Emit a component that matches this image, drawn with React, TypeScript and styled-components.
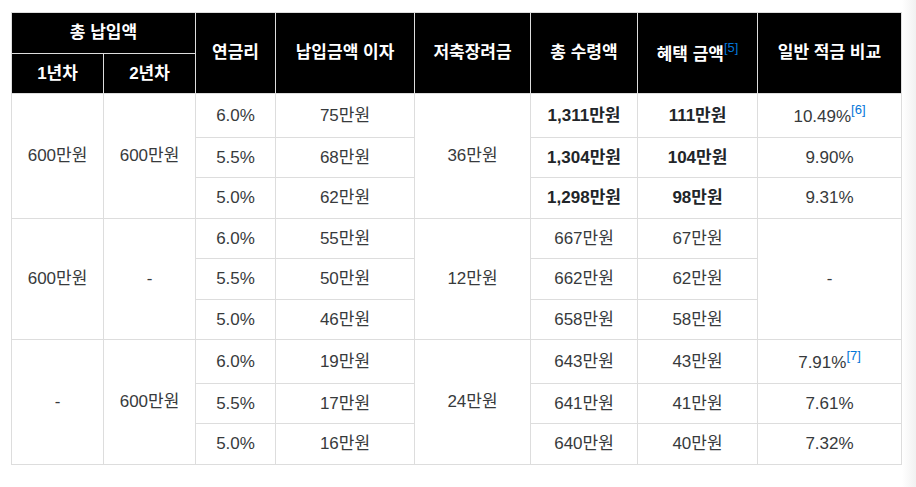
import React from 'react';
import styled, { createGlobalStyle } from 'styled-components';

const GlobalStyle = createGlobalStyle`
  html, body {
    margin: 0;
    padding: 0;
  }
  body {
    background: linear-gradient(to right, #fff 902px, #f1f1f1 916px);
    font-family: "Liberation Sans", "Noto Sans CJK KR", sans-serif;
    color: #373a3c;
  }
`;

const Page = styled.div`
  padding: 12px 0 0 11px;
  height: 487px;
  box-sizing: border-box;
`;

const Table = styled.table`
  width: 890px;
  table-layout: fixed;
  border-collapse: collapse;
  background: #fff;
  font-size: 17px;
  line-height: 23.5px;
`;

const HeadCell = styled.th`
  background: #000;
  color: #fff;
  font-weight: bold;
  border: 1px solid #dddddd;
  padding: 8px 5px;
  text-align: center;
  vertical-align: middle;
`;

const Cell = styled.td<{ $bold?: boolean }>`
  border: 1px solid #dddddd;
  padding: 8px 5px;
  text-align: center;
  vertical-align: middle;
  font-weight: ${(p) => (p.$bold ? 'bold' : 'normal')};
  color: ${(p) => (p.$bold ? '#212529' : '#373a3c')};
`;

const Note = styled.sup`
  color: #0275d8;
  font-size: 13px;
  font-weight: normal;
  line-height: 15px;
  vertical-align: 8px;
`;

type Row = {
  rate: string;
  interest: string;
  total: string;
  benefit: string;
  compare: string;
  note?: string;
};

type Group = {
  first: string;
  second: string;
  bonus: string;
  bold: boolean;
  rows: Row[];
  compareMerged?: boolean;
};

const groups: Group[] = [
  {
    first: '600만원',
    second: '600만원',
    bonus: '36만원',
    bold: true,
    rows: [
      { rate: '6.0%', interest: '75만원', total: '1,311만원', benefit: '111만원', compare: '10.49%', note: '6' },
      { rate: '5.5%', interest: '68만원', total: '1,304만원', benefit: '104만원', compare: '9.90%' },
      { rate: '5.0%', interest: '62만원', total: '1,298만원', benefit: '98만원', compare: '9.31%' },
    ],
  },
  {
    first: '600만원',
    second: '-',
    bonus: '12만원',
    bold: false,
    compareMerged: true,
    rows: [
      { rate: '6.0%', interest: '55만원', total: '667만원', benefit: '67만원', compare: '-' },
      { rate: '5.5%', interest: '50만원', total: '662만원', benefit: '62만원', compare: '' },
      { rate: '5.0%', interest: '46만원', total: '658만원', benefit: '58만원', compare: '' },
    ],
  },
  {
    first: '-',
    second: '600만원',
    bonus: '24만원',
    bold: false,
    rows: [
      { rate: '6.0%', interest: '19만원', total: '643만원', benefit: '43만원', compare: '7.91%', note: '7' },
      { rate: '5.5%', interest: '17만원', total: '641만원', benefit: '41만원', compare: '7.61%' },
      { rate: '5.0%', interest: '16만원', total: '640만원', benefit: '40만원', compare: '7.32%' },
    ],
  },
];

const widths = [92, 92, 80, 139, 116, 107, 120, 144];

function App(): JSX.Element {
  return (
    <Page>
      <GlobalStyle />
      <Table>
        <colgroup>
          {widths.map((w, i) => (
            <col key={i} style={{ width: w }} />
          ))}
        </colgroup>
        <thead>
          <tr>
            <HeadCell colSpan={2}>총 납입액</HeadCell>
            <HeadCell rowSpan={2}>연금리</HeadCell>
            <HeadCell rowSpan={2}>납입금액 이자</HeadCell>
            <HeadCell rowSpan={2}>저축장려금</HeadCell>
            <HeadCell rowSpan={2}>총 수령액</HeadCell>
            <HeadCell rowSpan={2}>
              혜택 금액<Note>[5]</Note>
            </HeadCell>
            <HeadCell rowSpan={2}>일반 적금 비교</HeadCell>
          </tr>
          <tr>
            <HeadCell>1년차</HeadCell>
            <HeadCell>2년차</HeadCell>
          </tr>
        </thead>
        <tbody>
          {groups.map((g) =>
            g.rows.map((r, i) => (
              <tr key={g.bonus + r.rate}>
                {i === 0 && <Cell rowSpan={3}>{g.first}</Cell>}
                {i === 0 && <Cell rowSpan={3}>{g.second}</Cell>}
                <Cell>{r.rate}</Cell>
                <Cell>{r.interest}</Cell>
                {i === 0 && <Cell rowSpan={3}>{g.bonus}</Cell>}
                <Cell $bold={g.bold}>{r.total}</Cell>
                <Cell $bold={g.bold}>{r.benefit}</Cell>
                {(!g.compareMerged || i === 0) && (
                  <Cell rowSpan={g.compareMerged ? 3 : 1}>
                    {r.compare}
                    {r.note && <Note>[{r.note}]</Note>}
                  </Cell>
                )}
              </tr>
            ))
          )}
        </tbody>
      </Table>
    </Page>
  );
}

export default App;
